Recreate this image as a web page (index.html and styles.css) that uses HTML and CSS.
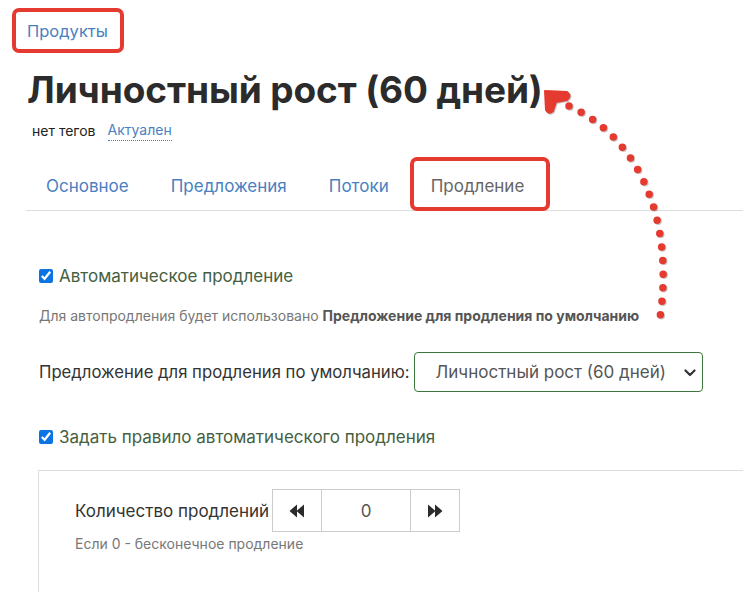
FILE: index.html
```html
<!DOCTYPE html>
<html lang="ru">
<head>
<meta charset="utf-8">
<title>Личностный рост (60 дней)</title>
<link rel="stylesheet" href="styles.css">
</head>
<body>
<div class="page">
  <div class="header">
    <a class="crumb" href="#">Продукты</a>
    <h1 class="title">Личностный рост (60 дней)</h1>
    <div class="meta">
      <span class="tags">нет тегов</span>
      <a class="status" href="#">Актуален</a>
    </div>
  </div>

  <ul class="tabs">
    <li class="tab"><a href="#">Основное</a></li>
    <li class="tab"><a href="#">Предложения</a></li>
    <li class="tab"><a href="#">Потоки</a></li>
    <li class="tab active"><a href="#">Продление</a></li>
  </ul>

  <div class="content">
    <label class="check">
      <input type="checkbox" checked>
      <span>Автоматическое продление</span>
    </label>
    <p class="hint">Для автопродления будет использовано <b>Предложение для продления по умолчанию</b></p>

    <div class="select-row">
      <label class="select-label">Предложение для продления по умолчанию:</label>
      <div class="select">
        <span class="select-value">Личностный рост (60 дней)</span>
        <svg class="chev" width="12" height="8" viewBox="0 0 12 8"><path d="M1.5 1.5 L6 6 L10.5 1.5" fill="none" stroke="#333" stroke-width="2.2" stroke-linecap="round" stroke-linejoin="round"/></svg>
      </div>
    </div>

    <label class="check check2">
      <input type="checkbox" checked>
      <span>Задать правило автоматического продления</span>
    </label>

    <div class="panel">
      <div class="count-row">
        <span class="count-label">Количество продлений</span>
        <div class="spinner">
          <button class="spin-btn" type="button" aria-label="уменьшить">
            <svg width="16" height="14" viewBox="0 0 16 14"><path d="M0.5 7 L8 0.5 L8 13.5 Z M7.5 7 L15 0.5 L15 13.5 Z" fill="#2b2b2b"/></svg>
          </button>
          <div class="spin-value">0</div>
          <button class="spin-btn" type="button" aria-label="увеличить">
            <svg width="16" height="14" viewBox="0 0 16 14"><path d="M15.5 7 L8 0.5 L8 13.5 Z M8.5 7 L1 0.5 L1 13.5 Z" fill="#2b2b2b"/></svg>
          </button>
        </div>
      </div>
      <p class="help">Если 0 - бесконечное продление</p>
    </div>
  </div>
</div>

<div class="mark mark-crumb"></div>
<div class="mark mark-tab"></div>
<svg class="arrow" width="743" height="592" viewBox="0 0 743 592">
  <path d="M569 106 C 640 138, 676 222, 659 324" fill="none" stroke="#e53a30" stroke-width="7.5" stroke-linecap="round" stroke-dasharray="0 13.6"/>
  <path d="M545 91 L567 92 Q572 96 567 100 L556 102 L553 111 Q549 115 546 110 Z" fill="#e53a30" stroke="#e53a30" stroke-width="2" stroke-linejoin="round"/>
</svg>
</body>
</html>
```

FILE: styles.css
```css
* { box-sizing: border-box; }

body {
  margin: 0;
  background: #fff;
  font-family: Inter, "Noto Sans", "Liberation Sans", sans-serif;
  color: #333;
  width: 743px;
  height: 592px;
  overflow: hidden;
  position: relative;
}

a { text-decoration: none; }

.header {
  padding: 20px 0 0 27px;
}

.crumb {
  display: block;
  font-size: 16.5px;
  line-height: 22px;
  color: #4a7fc1;
}

.title {
  margin: 24px 0 0;
  font-size: 37px;
  line-height: 48px;
  font-weight: 700;
  color: #2b2b2b;
  letter-spacing: -0.1px;
}

.meta {
  display: flex;
  gap: 12px;
  padding-left: 5px;
  margin-top: 7px;
  font-size: 14px;
  line-height: 20px;
}

.tags { color: #222; }

.status {
  color: #4a7fc1;
  border-bottom: 1px dotted #4a7fc1;
  line-height: 18px;
}

.tabs {
  list-style: none;
  margin: 22px 0 0 26px;
  padding: 0;
  display: flex;
  border-bottom: 1px solid #ddd;
}

.tab a {
  display: block;
  padding: 11px 21px 12px 20px;
  font-size: 17px;
  line-height: 24px;
  color: #4a7fc1;
}

.tab + .tab a { padding-left: 21px; padding-right: 21px; }

.tab.active a { color: #666; }

.content {
  padding: 54px 0 0 39px;
}

.check {
  display: flex;
  align-items: center;
  gap: 6px;
  font-size: 17px;
  line-height: 22px;
  color: #44603f;
}

.check input {
  margin: 0;
  width: 14px;
  height: 14px;
  accent-color: #0b74e5;
}

.hint {
  margin: 19px 0 0;
  font-size: 14px;
  line-height: 20px;
  color: #777;
}

.hint b { color: #555; font-weight: 700; }

.select-row {
  display: flex;
  align-items: center;
  gap: 4px;
  margin-top: 26px;
}

.select-label {
  font-size: 16.7px;
  color: #333;
}

.select {
  width: 289px;
  height: 40px;
  border: 1px solid #3c763d;
  border-radius: 4px;
  display: flex;
  align-items: center;
  justify-content: space-between;
  padding: 0 6px 0 21px;
  font-size: 17px;
  color: #555;
}

.chev { margin-top: 1px; }

.check2 { margin-top: 34px; }

.panel {
  margin-top: 22px;
  border-top: 1px solid #ddd;
  border-left: 1px solid #ddd;
  padding: 18px 0 40px 36px;
  margin-left: -1px;
}

.count-row {
  display: flex;
  align-items: center;
  gap: 3px;
}

.count-label {
  font-size: 17px;
  color: #333;
}

.spinner {
  display: flex;
  height: 43px;
  border: 1px solid #ccc;
}

.spin-btn {
  width: 48px;
  border: 0;
  background: #fff;
  display: flex;
  align-items: center;
  justify-content: center;
  padding: 0;
}

.spin-value {
  width: 90px;
  border-left: 1px solid #ccc;
  border-right: 1px solid #ccc;
  display: flex;
  align-items: center;
  justify-content: center;
  font-size: 17px;
  color: #555;
}

.help {
  margin: 3px 0 0;
  font-size: 14px;
  line-height: 18px;
  color: #777;
}

.mark {
  position: absolute;
  border: 4px solid #e53a30;
  border-radius: 7px;
  pointer-events: none;
}

.mark-crumb { left: 12px; top: 8px; width: 112px; height: 45px; }
.mark-tab { left: 410px; top: 157px; width: 140px; height: 54px; }

.arrow {
  position: absolute;
  left: 0;
  top: 0;
  pointer-events: none;
  filter: drop-shadow(1px 1.5px 0.5px rgba(0,0,0,0.22));
}
```
